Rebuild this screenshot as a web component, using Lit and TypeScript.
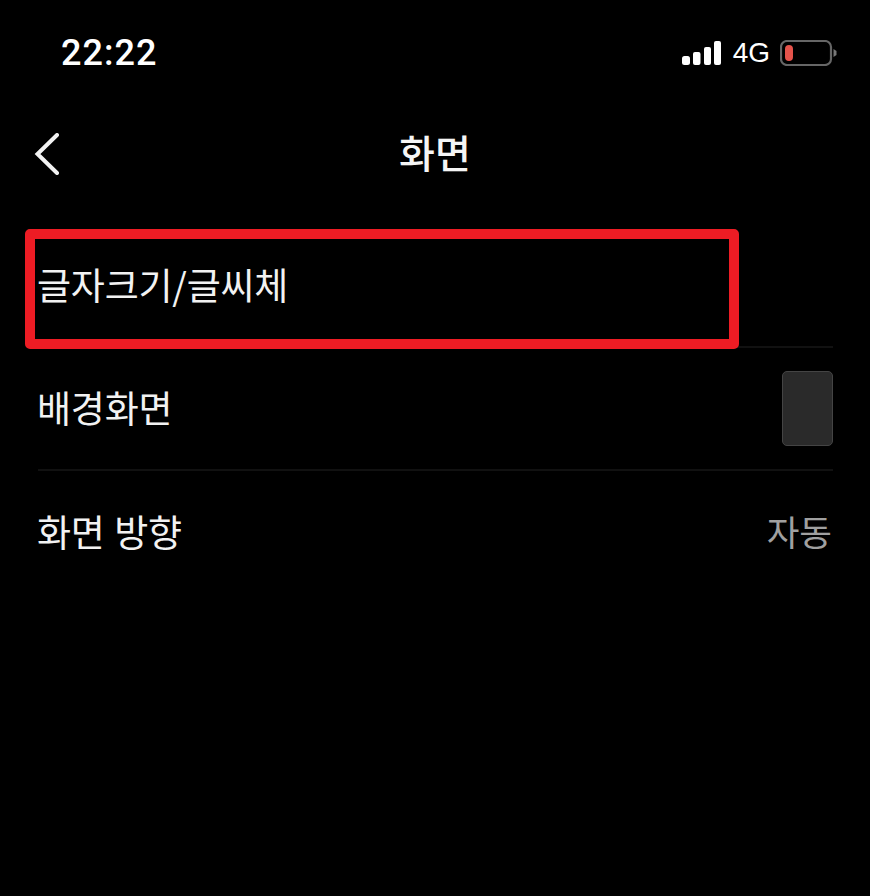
import { LitElement, html, css } from "lit";
import { customElement } from "lit/decorators.js";

@customElement("app-root")
export class AppRoot extends LitElement {
  static styles = css`
    :host {
      display: block;
      width: 870px;
      height: 896px;
      background: #000;
      color: #f2f2f2;
      font-family: "Noto Sans CJK KR", "Liberation Sans", sans-serif;
      overflow: hidden;
    }
    .page {
      position: relative;
      height: 896px;
    }
    .status {
      height: 68px;
      padding: 38px 33px 0 61px;
      display: flex;
      align-items: center;
      justify-content: space-between;
      box-sizing: border-box;
    }
    .time {
      font-family: Roboto, "Liberation Sans", sans-serif;
      font-size: 36px;
      font-weight: 500;
      color: #fff;
      letter-spacing: 1px;
      line-height: 40px;
    }
    .sys {
      display: flex;
      align-items: center;
      gap: 10px;
      color: #fff;
    }
    .net {
      font-family: "Liberation Sans", sans-serif;
      font-size: 28px;
      line-height: 30px;
      margin-left: 2px;
    }
    .nav {
      height: 157px;
      display: grid;
      grid-template-columns: 1fr auto 1fr;
      align-items: center;
      padding: 17px 34px 0 34px;
      box-sizing: border-box;
    }
    .back {
      display: block;
      margin-bottom: 3px;
    }
    .title {
      font-size: 39px;
      font-weight: 500;
      line-height: 50px;
      color: #f5f5f5;
      margin-bottom: 9px;
    }
    .list {
      margin: 0 37px 0 38px;
    }
    .row {
      height: 123px;
      display: flex;
      align-items: center;
      justify-content: space-between;
      border-bottom: 2px solid #111;
      box-sizing: border-box;
      font-size: 37px;
      line-height: 48px;
      font-weight: 400;
      letter-spacing: -0.2px;
    }
    .row:last-child {
      border-bottom: none;
    }
    .label {
      margin: 0 0 4px -1px;
      word-spacing: 1.5px;
    }
    .thumb {
      width: 51px;
      height: 75px;
      background: #2a2a2a;
      border: 1px solid #444;
      border-radius: 5px;
      box-sizing: border-box;
    }
    .value {
      color: #a0a0a0;
      font-size: 35.5px;
      letter-spacing: 0;
      margin: 0 1px 4px 0;
    }
    .mark {
      position: absolute;
      left: 25px;
      top: 229px;
      width: 714px;
      height: 120px;
      box-sizing: border-box;
      border: 10px solid #ed1c24;
      border-radius: 5px;
    }
  `;

  render() {
    return html`
      <div class="page">
        <div class="status">
          <span class="time">22:22</span>
          <div class="sys">
            <svg width="39" height="25" viewBox="0 0 39 25">
              <rect x="0" y="15" width="8" height="9" rx="2.5" fill="#fff" />
              <rect x="11" y="11" width="7.5" height="13" rx="2" fill="#fff" />
              <rect x="22" y="6" width="7" height="18" rx="2" fill="#fff" />
              <rect x="32" y="0" width="7" height="24" rx="2" fill="#fff" />
            </svg>
            <span class="net">4G</span>
            <svg width="57" height="26" viewBox="0 0 57 26">
              <rect x="1" y="1" width="50" height="24" rx="6" fill="none" stroke="#666" stroke-width="2.2" />
              <rect x="5" y="5" width="8" height="16" rx="4" fill="#e5534b" />
              <path d="M53.5 9 L56.5 11 V15 L53.5 17 Z" fill="#777" />
            </svg>
          </div>
        </div>
        <div class="nav">
          <svg class="back" width="26" height="42" viewBox="0 0 26 42">
            <path d="M23 2 L3.5 21 L23 40" fill="none" stroke="#f2f2f2" stroke-width="4" stroke-linecap="round" stroke-linejoin="miter" />
          </svg>
          <span class="title">화면</span>
          <span></span>
        </div>
        <div class="list">
          <div class="row"><span class="label">글자크기/글씨체</span></div>
          <div class="row"><span class="label">배경화면</span><div class="thumb"></div></div>
          <div class="row"><span class="label">화면 방향</span><span class="value">자동</span></div>
        </div>
        <div class="mark"></div>
      </div>
    `;
  }
}
